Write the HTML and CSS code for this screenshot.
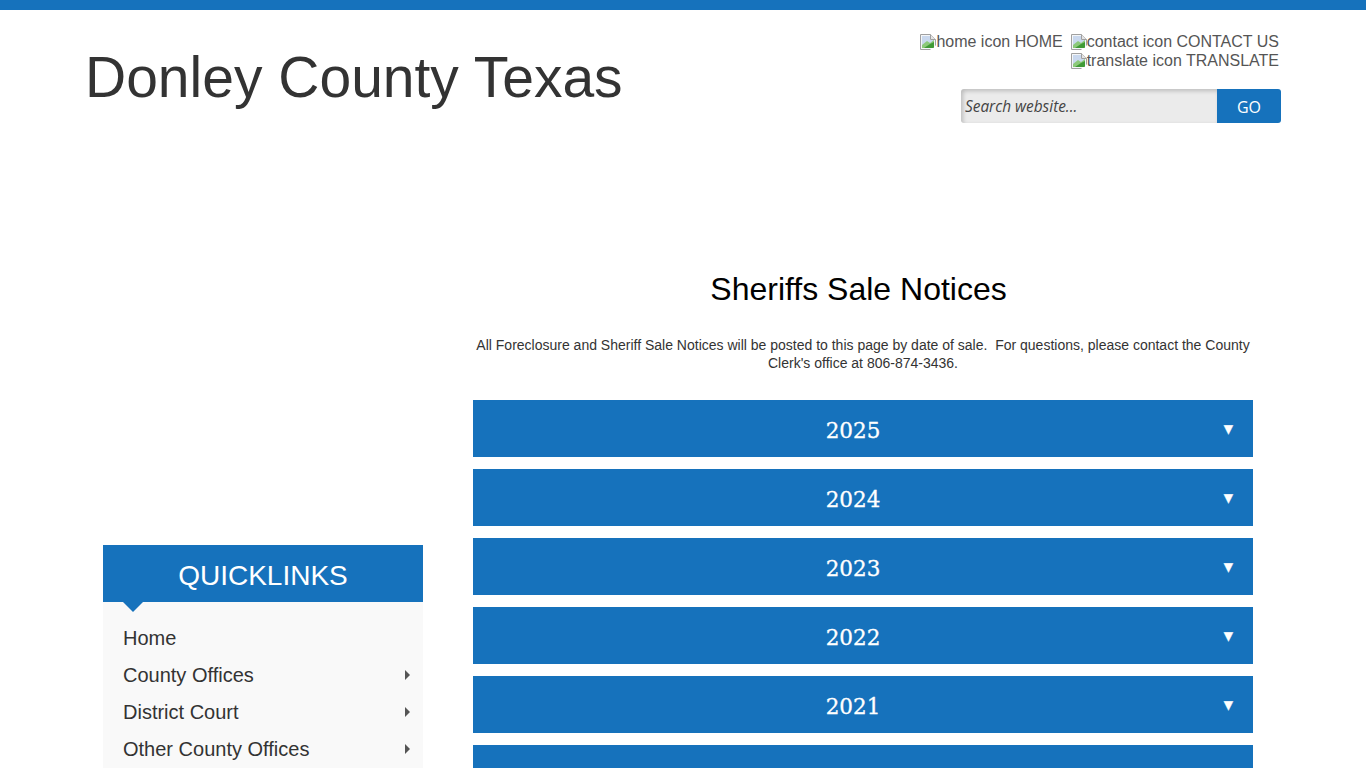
FILE: index.html
```html
<!DOCTYPE html>
<html lang="en">
<head>
    <meta charset="UTF-8">
    <meta name="viewport" content="width=device-width, initial-scale=1.0">
    <title>Donley County Texas</title>
    <link rel="stylesheet" href="styles.css">
</head>
<body>

<svg class="sprite" width="0" height="0">
    <symbol id="broken" viewBox="0 0 16 16">
        <path d="M.5.5h10l5 5v10H.5z" fill="#f4f6f8" stroke="#a0a0a0"/>
        <path d="M2 2h8v4h4v8H2z" fill="#c9d8ee"/>
        <path d="M2 14v-3l5-4 3 2 4-3v8z" fill="#8cc97a"/>
        <path d="M4 14l6-4 4-2v6z" fill="#3f9a36"/>
        <path d="M10.500.5v5h5" fill="#e4e4e4" stroke="#a0a0a0"/>
        <path d="M10 16l2-2 1 .5 3-3.500v5z" fill="#fff"/>
    </symbol>
</svg>

<div class="topbar"></div>

<header class="header">
    <h1 class="site-title">Donley County Texas</h1>
    <div class="tools">
        <div class="tool-row">
            <a class="tool" href="#"><svg class="broken"><use href="#broken"/></svg>home icon HOME</a>
            <a class="tool" href="#"><svg class="broken"><use href="#broken"/></svg>contact icon CONTACT US</a>
        </div>
        <div class="tool-row">
            <a class="tool" href="#"><svg class="broken"><use href="#broken"/></svg>translate icon TRANSLATE</a>
        </div>
        <form class="search">
            <input class="search-input" type="text" placeholder="Search website...">
            <button class="search-btn" type="button">GO</button>
        </form>
    </div>
</header>

<div class="content">
    <aside class="sidebar">
        <h2 class="side-title">QUICKLINKS</h2>
        <ul class="side-menu">
            <li><a href="#">Home</a></li>
            <li class="has-sub"><a href="#">County Offices</a></li>
            <li class="has-sub"><a href="#">District Court</a></li>
            <li class="has-sub"><a href="#">Other County Offices</a></li>
        </ul>
    </aside>

    <main class="main">
        <h2 class="page-title">Sheriffs Sale Notices</h2>
        <p class="intro">All Foreclosure and Sheriff Sale Notices will be posted to this page by date of sale.&nbsp; For questions, please contact the County Clerk's office at 806-874-3436.</p>

        <div class="year"><span>2025</span></div>
        <div class="year"><span>2024</span></div>
        <div class="year"><span>2023</span></div>
        <div class="year"><span>2022</span></div>
        <div class="year"><span>2021</span></div>
        <div class="year year-next"></div>
    </main>
</div>

</body>
</html>
```

FILE: styles.css
```css
html, body {
    height: 100%;
    overflow: hidden;
}
body {
    margin: 0;
    background: #fff;
    color: #333;
    font-family: "Liberation Sans", Arial, sans-serif;
}
a {
    color: inherit;
    text-decoration: none;
}
.sprite {
    display: block;
}

.topbar {
    height: 10px;
    background: #1672bc;
}

.header {
    display: flex;
    justify-content: space-between;
    padding: 0 85px;
}
.site-title {
    margin: 31px 0 0;
    font-size: 57px;
    font-weight: normal;
    line-height: 72px;
}
.tools {
    display: flex;
    flex-direction: column;
    align-items: flex-end;
    padding-top: 22px;
    font-size: 16px;
    line-height: 19px;
    color: #555;
}
.tool-row {
    display: flex;
    justify-content: flex-end;
    gap: 8px;
    padding-right: 2px;
}
.tool {
    display: flex;
    align-items: center;
}
.broken {
    width: 16px;
    height: 16px;
}

.search {
    display: flex;
    width: 320px;
    height: 34px;
    margin-top: 19px;
}
.search-input {
    flex: 1;
    min-width: 0;
    border: 0;
    border-radius: 3px 0 0 3px;
    padding: 0 4px;
    background: #ebebeb;
    box-shadow: inset 2px 2px 4px rgba(0, 0, 0, .2);
    font: italic 15.4px "Open Sans", sans-serif;
    color: #444;
}
.search-input::placeholder {
    color: #444;
    opacity: 1;
}
.search-btn {
    width: 64px;
    border: 0;
    border-radius: 0 3px 3px 0;
    padding: 2px 0 0;
    background: #1672bc;
    color: #fff;
    font: 16px "Open Sans", sans-serif;
}

.content {
    display: flex;
    align-items: flex-start;
    padding-left: 103px;
}

.sidebar {
    width: 320px;
    margin-top: 422px;
    background: #f9f9f9;
}
.side-title {
    position: relative;
    margin: 0;
    height: 57px;
    background: #1672bc;
    color: #fff;
    font-size: 28px;
    font-weight: normal;
    line-height: 61px;
    text-align: center;
}
.side-title::after {
    content: "";
    position: absolute;
    left: 20px;
    top: 57px;
    border-style: solid;
    border-width: 10px 10px 0;
    border-color: #1672bc transparent transparent;
}
.side-menu {
    margin: 0;
    padding: 18px 0 0;
    list-style: none;
}
.side-menu li {
    position: relative;
    height: 37px;
    padding-left: 20px;
    font-size: 20px;
    line-height: 37px;
}
.has-sub::after {
    content: "";
    position: absolute;
    right: 13px;
    top: 13px;
    border-style: solid;
    border-width: 5px 0 5px 5px;
    border-color: transparent transparent transparent #555;
}

.main {
    width: 780px;
    margin-left: 50px;
}
.page-title {
    margin: 146px 0 0;
    padding-right: 9px;
    color: #000;
    font-size: 32px;
    font-weight: normal;
    line-height: 40px;
    text-align: center;
}
.intro {
    margin: 27px 0 0;
    font-size: 14px;
    line-height: 18px;
    text-align: center;
    color: #333;
}
.year {
    position: relative;
    height: 57px;
    margin-bottom: 12px;
    background: #1672bc;
    color: #fff;
    font-family: "DejaVu Serif", serif;
    font-size: 21.5px;
    -webkit-text-stroke: .3px #fff;
    line-height: 61px;
    text-align: center;
}
.year:first-of-type {
    margin-top: 28px;
}
.year span {
    margin-left: -20px;
}
.year::after {
    content: "\25BC";
    position: absolute;
    right: 20px;
    top: 1px;
    font: 12px/57px "DejaVu Sans", sans-serif;
}
```
